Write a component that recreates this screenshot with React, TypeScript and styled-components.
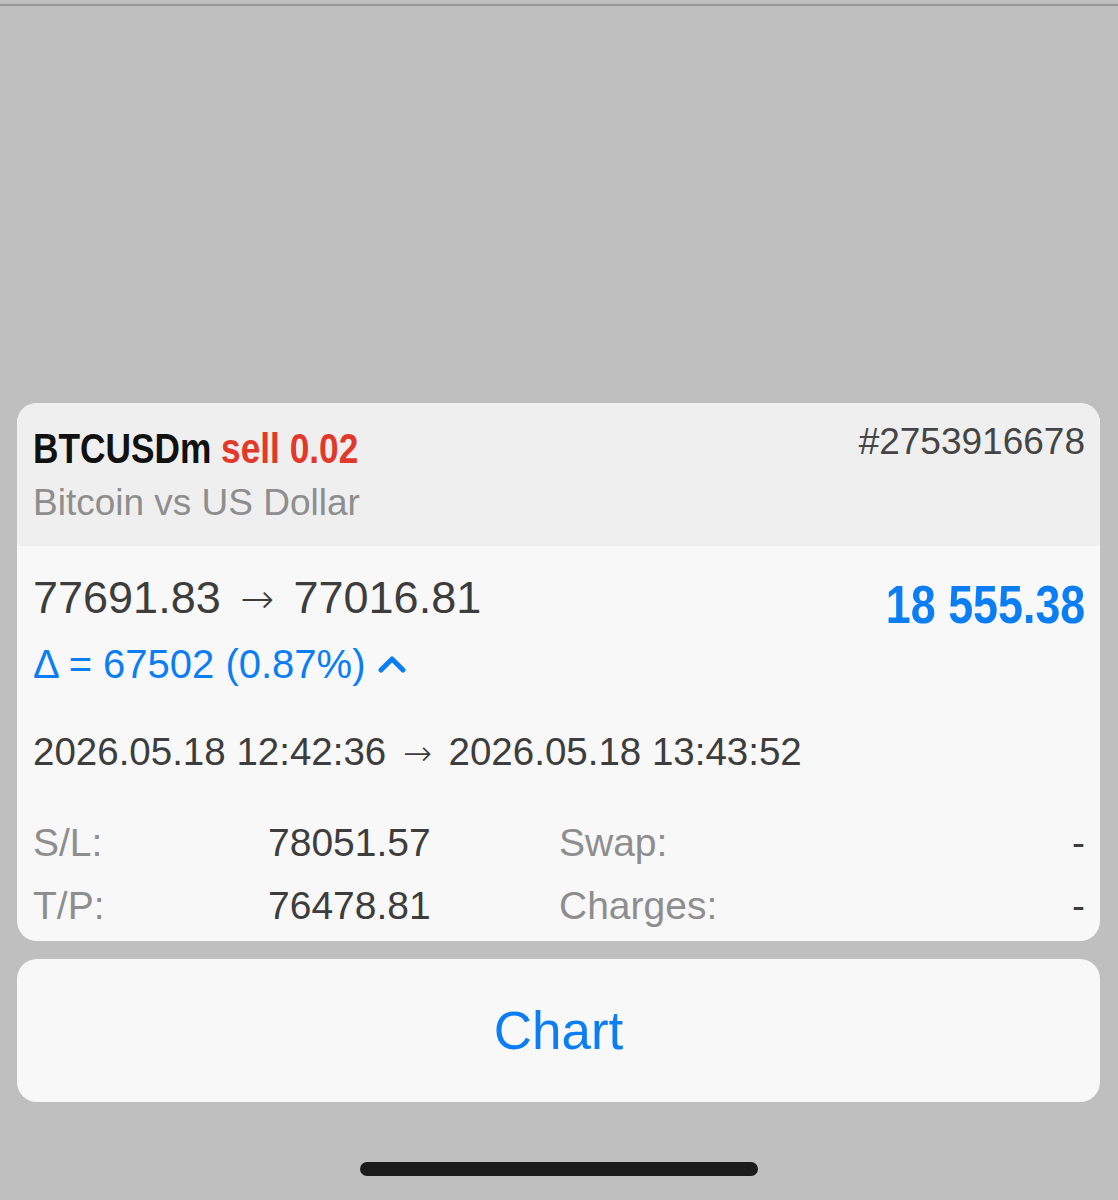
import React from "react";
import styled, { createGlobalStyle } from "styled-components";

const Global = createGlobalStyle`
  html, body { margin: 0; padding: 0; background: #bfbfbf; }
  body { font-family: "Liberation Sans", Arial, sans-serif; }
  * { box-sizing: border-box; }
`;

const Screen = styled.div`
  width: 1118px;
  height: 1200px;
  background: #bfbfbf;
  display: flex;
  flex-direction: column;
  padding: 0 18px 0 17px;
  overflow: hidden;
`;

const TopRule = styled.div`
  margin: 4px -18px 0 -17px;
  height: 2px;
  background: #979797;
`;

const Sheet = styled.div`
  margin-top: auto;
  display: flex;
  flex-direction: column;
  gap: 18px;
`;

const Card = styled.section`
  border-radius: 20px;
  overflow: hidden;
  background: #f8f8f8;
`;

const Header = styled.header`
  background: #efefef;
  padding: 20px 15px 21px 16px;
`;

const TitleRow = styled.div`
  display: flex;
  justify-content: space-between;
  align-items: flex-start;
`;

const Title = styled.div`
  font-weight: 700;
  font-size: 43px;
  line-height: 50px;
  color: #111;
  white-space: nowrap;
  transform: scaleX(0.82);
  transform-origin: left center;
`;

const Side = styled.span`
  color: #e2392b;
`;

const Ticket = styled.div`
  font-size: 37px;
  line-height: 44px;
  color: #454545;
  margin-top: -3px;
`;

const Subtitle = styled.div`
  margin-top: 8px;
  font-size: 37px;
  line-height: 44px;
  color: #8e8e8e;
`;

const Body = styled.div`
  padding: 26px 15px 4px 16px;
`;

const PriceRow = styled.div`
  display: flex;
  justify-content: space-between;
  align-items: flex-start;
`;

const Prices = styled.div`
  font-size: 45px;
  line-height: 52px;
  color: #3d3d3d;
`;

const Arrow = styled.span`
  display: inline-block;
  font-family: "DejaVu Sans", sans-serif;
  font-weight: 200;
  font-size: 0.9em;
  line-height: 1;
  margin: 0 0.48em;
`;

const Profit = styled.div`
  font-weight: 700;
  font-size: 54px;
  line-height: 52px;
  margin-top: 6px;
  color: #0c7ef5;
  white-space: nowrap;
  transform: scaleX(0.83);
  transform-origin: right center;
`;

const Delta = styled.div`
  margin-top: 12px;
  display: flex;
  align-items: center;
  gap: 12px;
  font-size: 40px;
  line-height: 44px;
  color: #0c7ef5;
`;

const Dates = styled.div`
  margin-top: 44px;
  font-size: 38.5px;
  line-height: 44px;
  color: #3d3d3d;
`;

const Stats = styled.div`
  margin-top: 37px;
  display: grid;
  grid-template-columns: 235px 291px 1fr auto;
  grid-auto-rows: 63px;
  align-items: center;
  font-size: 39px;
`;

const Label = styled.div`
  color: #8e8e8e;
`;

const Value = styled.div<{ $right?: boolean }>`
  color: #3d3d3d;
  text-align: ${(p) => (p.$right ? "right" : "left")};
`;

const ActionButton = styled.button`
  height: 143px;
  border: none;
  border-radius: 20px;
  background: #f8f8f8;
  font-family: "Liberation Sans", Arial, sans-serif;
  font-size: 53px;
  color: #0c7ef5;
  padding: 0;
  cursor: pointer;
`;

const HomeBar = styled.div`
  align-self: center;
  margin: 60px 0 24px;
  width: 398px;
  height: 14px;
  border-radius: 7px;
  background: #1b1b1b;
`;

const Chevron = () => (
  <svg width="28" height="20" viewBox="0 0 28 20">
    <polyline
      points="3,16 14,5 25,16"
      fill="none"
      stroke="#0c7ef5"
      strokeWidth="5"
      strokeLinecap="round"
      strokeLinejoin="round"
    />
  </svg>
);

export default function App() {
  return (
    <>
      <Global />
      <Screen>
        <TopRule />
        <Sheet>
          <Card>
            <Header>
              <TitleRow>
                <Title>
                  BTCUSDm <Side>sell 0.02</Side>
                </Title>
                <Ticket>#2753916678</Ticket>
              </TitleRow>
              <Subtitle>Bitcoin vs US Dollar</Subtitle>
            </Header>
            <Body>
              <PriceRow>
                <Prices>
                  77691.83<Arrow>→</Arrow>77016.81
                </Prices>
                <Profit>18 555.38</Profit>
              </PriceRow>
              <Delta>
                <span>Δ = 67502 (0.87%)</span>
                <Chevron />
              </Delta>
              <Dates>
                2026.05.18 12:42:36<Arrow>→</Arrow>2026.05.18 13:43:52
              </Dates>
              <Stats>
                <Label>S/L:</Label>
                <Value>78051.57</Value>
                <Label>Swap:</Label>
                <Value $right>-</Value>
                <Label>T/P:</Label>
                <Value>76478.81</Value>
                <Label>Charges:</Label>
                <Value $right>-</Value>
              </Stats>
            </Body>
          </Card>
          <ActionButton>Chart</ActionButton>
        </Sheet>
        <HomeBar />
      </Screen>
    </>
  );
}
